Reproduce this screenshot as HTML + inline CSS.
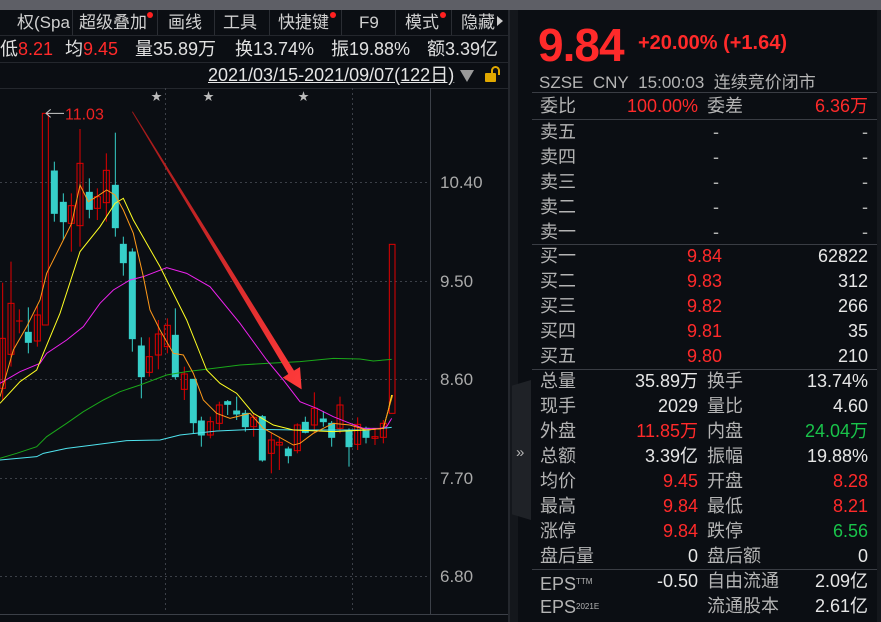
<!DOCTYPE html>
<html><head><meta charset="utf-8"><style>
*{margin:0;padding:0;box-sizing:border-box}
body{width:881px;height:622px;background:#0b0e13;position:relative;overflow:hidden;font-family:"Liberation Sans","Noto Sans CJK SC",sans-serif;color:#d8d8d8}
.a{position:absolute;white-space:nowrap}
.r{color:#ff2a2a}.g{color:#19c34a}.l{color:#b4b4b4}.w{color:#e6e6e6}
.tb{font-size:17px;color:#d0d0d0;top:10px;line-height:25px}
.sep{position:absolute;top:10px;width:1px;height:25px;background:#2a2d33}
.dot{position:absolute;width:6px;height:6px;border-radius:3px;background:#ff2020}
.st{position:absolute;top:36px;font-size:18px;line-height:26px;color:#e0e0e0;white-space:nowrap}
.row{position:absolute;left:532px;width:340px;height:25px;font-size:18px;line-height:25px}
.row span{position:absolute;white-space:nowrap}
.hl{position:absolute;left:532px;width:345px;height:1px;background:#3a3d44}
</style></head><body>
<div class="a" style="left:0;top:0;width:881px;height:10px;background:#5e5f66"></div>
<div class="a" style="left:508px;top:10px;width:2px;height:612px;background:#24272d"></div>
<div class="a" style="left:510px;top:10px;width:8px;height:612px;background:#14171c"></div>
<div class="a" style="left:512px;top:380px;width:19px;height:140px;background:#1f2227;clip-path:polygon(0 4%,100% 0,100% 100%,0 96%)"></div>
<div class="a l" style="left:516px;top:444px;font-size:15px">»</div>
<div class="a" style="left:877px;top:10px;width:4px;height:612px;background:#14171c"></div>
<div class="a" style="left:0;top:35px;width:508px;height:1px;background:#24272d"></div>
<div class="a" style="left:0;top:62px;width:508px;height:1px;background:#24272d"></div>
<div class="a" style="left:0;top:88px;width:508px;height:1px;background:#24272d"></div>
<div class="a tb" style="left:17px">权(Spa</div>
<div class="sep" style="left:72px"></div>
<div class="a tb" style="left:79px">超级叠加</div><div class="dot" style="left:147px;top:12px"></div>
<div class="sep" style="left:157px"></div>
<div class="a tb" style="left:168px">画线</div>
<div class="sep" style="left:214px"></div>
<div class="a tb" style="left:223px">工具</div>
<div class="sep" style="left:269px"></div>
<div class="a tb" style="left:278px">快捷键</div><div class="dot" style="left:330px;top:12px"></div>
<div class="sep" style="left:341px"></div>
<div class="a tb" style="left:359px">F9</div>
<div class="sep" style="left:395px"></div>
<div class="a tb" style="left:405px">模式</div><div class="dot" style="left:440px;top:12px"></div>
<div class="sep" style="left:451px"></div>
<div class="a tb" style="left:461px">隐藏</div>
<div class="a" style="left:497px;top:16px;width:0;height:0;border-left:6px solid #ccc;border-top:5px solid transparent;border-bottom:5px solid transparent"></div>
<div class="st" style="left:0">低<span class="r">8.21</span></div>
<div class="st" style="left:65px">均<span class="r">9.45</span></div>
<div class="st" style="left:135px">量35.89万</div>
<div class="st" style="left:235px">换13.74%</div>
<div class="st" style="left:331px">振19.88%</div>
<div class="st" style="left:427px">额3.39亿</div>
<div class="a" style="left:208px;top:63px;font-size:18px;line-height:24px;color:#e6e6e6;text-decoration:underline">2021/03/15-2021/09/07(122日)</div>
<div class="a" style="left:460px;top:70px;width:0;height:0;border-top:12px solid #9a9a9a;border-left:7px solid transparent;border-right:7px solid transparent"></div>
<div class="a" style="left:485px;top:73px;width:11px;height:9px;background:#e0a800;border-radius:1px"></div>
<div class="a" style="left:491px;top:66px;width:9px;height:9px;border:2px solid #e0a800;border-bottom:none;border-radius:5px 5px 0 0"></div>
<svg class="a" style="left:0;top:88px" width="508" height="534" viewBox="0 0 508 534">
<g stroke="#3c4048" stroke-dasharray="2,3" stroke-width="1">
<line x1="0" y1="94.5" x2="430" y2="94.5"/><line x1="0" y1="193.5" x2="430" y2="193.5"/><line x1="0" y1="291.5" x2="430" y2="291.5"/><line x1="0" y1="390.5" x2="430" y2="390.5"/><line x1="0" y1="488.5" x2="430" y2="488.5"/>
<line x1="165.5" y1="0" x2="165.5" y2="525"/><line x1="352.5" y1="0" x2="352.5" y2="525"/>
</g>
<line x1="430.5" y1="0" x2="430.5" y2="526" stroke="#3c4048"/>
<line x1="0" y1="526.5" x2="508" y2="526.5" stroke="#3c4048"/>
<g fill="#aaa" font-size="17" font-family="Liberation Sans"><text x="440" y="100">10.40</text><text x="440" y="199">9.50</text><text x="440" y="297">8.60</text><text x="440" y="396">7.70</text><text x="440" y="494">6.80</text></g>
<g fill="#bbb" font-size="11"><text x="151" y="12">★</text><text x="203" y="12">★</text><text x="298" y="12">★</text></g>
</svg>
<svg class="a" style="left:0;top:100px" width="440" height="380" viewBox="0 0 1320 1140">
<g stroke-width="3">
<g stroke="#e00000" fill="none">
<line x1="8" y1="548" x2="8" y2="900"/><rect x="0" y="715" width="16" height="150"/>
<line x1="33" y1="485" x2="33" y2="800"/><rect x="24" y="610" width="18" height="153"/>
<line x1="58" y1="628" x2="58" y2="700"/><line x1="48" y1="663" x2="68" y2="663"/>
<line x1="112" y1="618" x2="112" y2="740"/><rect x="103" y="645" width="18" height="78"/>
<rect x="127" y="40" width="18" height="635"/>
<line x1="214" y1="280" x2="214" y2="455"/><rect x="205" y="317" width="18" height="53"/>
<line x1="240" y1="87" x2="240" y2="440"/><rect x="231" y="190" width="18" height="187"/>
<line x1="292" y1="265" x2="292" y2="360"/><rect x="283" y="290" width="18" height="35"/>
<line x1="319" y1="160" x2="319" y2="365"/><rect x="310" y="211" width="18" height="97"/>
<line x1="448" y1="712" x2="448" y2="830"/><rect x="439" y="770" width="18" height="47"/>
<line x1="475" y1="660" x2="475" y2="808"/><rect x="466" y="702" width="18" height="63"/>
<line x1="502" y1="655" x2="502" y2="760"/><rect x="493" y="676" width="18" height="64"/>
<line x1="553" y1="800" x2="553" y2="900"/><rect x="544" y="822" width="18" height="46"/>
<line x1="631" y1="950" x2="631" y2="1015"/><rect x="622" y="965" width="18" height="40"/>
<line x1="658" y1="905" x2="658" y2="990"/><rect x="649" y="915" width="18" height="55"/>
<line x1="761" y1="940" x2="761" y2="1010"/><rect x="752" y="952" width="18" height="28"/>
<line x1="814" y1="1000" x2="814" y2="1120"/><rect x="805" y="1020" width="18" height="40"/>
<line x1="838" y1="1010" x2="838" y2="1110"/><rect x="829" y="1027" width="18" height="8"/>
<line x1="892" y1="970" x2="892" y2="1060"/><rect x="883" y="975" width="18" height="77"/>
<line x1="943" y1="877" x2="943" y2="1000"/><rect x="934" y="925" width="18" height="50"/>
<line x1="1020" y1="890" x2="1020" y2="1000"/><rect x="1011" y="915" width="18" height="70"/>
<line x1="1073" y1="952" x2="1073" y2="1050"/><rect x="1064" y="973" width="18" height="60"/>
<line x1="1125" y1="985" x2="1125" y2="1035"/><rect x="1116" y="1010" width="18" height="5"/>
<line x1="1150" y1="960" x2="1150" y2="1030"/><rect x="1141" y="970" width="18" height="42"/>
<rect x="1168" y="433" width="17" height="507"/>
</g>
<g stroke="#36cfc9" fill="#36cfc9">
<line x1="85" y1="622" x2="85" y2="760"/><rect x="76" y="697" width="18" height="30"/>
<line x1="163" y1="185" x2="163" y2="365"/><rect x="154" y="213" width="18" height="127"/>
<line x1="190" y1="280" x2="190" y2="420"/><rect x="181" y="307" width="18" height="58"/>
<line x1="268" y1="235" x2="268" y2="355"/><rect x="259" y="277" width="18" height="51"/>
<line x1="346" y1="98" x2="346" y2="410"/><rect x="337" y="256" width="18" height="127"/>
<line x1="370" y1="410" x2="370" y2="527"/><rect x="361" y="433" width="18" height="55"/>
<line x1="397" y1="445" x2="397" y2="755"/><rect x="388" y="456" width="18" height="260"/>
<line x1="424" y1="712" x2="424" y2="895"/><rect x="415" y="738" width="18" height="92"/>
<line x1="526" y1="625" x2="526" y2="838"/><rect x="517" y="706" width="18" height="124"/>
<line x1="580" y1="838" x2="580" y2="1000"/><rect x="571" y="838" width="18" height="130"/>
<line x1="604" y1="950" x2="604" y2="1040"/><rect x="595" y="963" width="18" height="42"/>
<line x1="683" y1="900" x2="683" y2="945"/><rect x="674" y="905" width="18" height="8"/>
<line x1="710" y1="890" x2="710" y2="960"/><rect x="701" y="933" width="18" height="9"/>
<line x1="736" y1="930" x2="736" y2="995"/><rect x="727" y="940" width="18" height="40"/>
<line x1="787" y1="945" x2="787" y2="1085"/><rect x="778" y="950" width="18" height="130"/>
<line x1="865" y1="1040" x2="865" y2="1090"/><rect x="856" y="1047" width="18" height="20"/>
<line x1="916" y1="950" x2="916" y2="1000"/><rect x="907" y="967" width="18" height="30"/>
<line x1="970" y1="933" x2="970" y2="980"/><rect x="961" y="957" width="18" height="8"/>
<line x1="995" y1="963" x2="995" y2="1040"/><rect x="986" y="970" width="18" height="42"/>
<line x1="1047" y1="985" x2="1047" y2="1100"/><rect x="1038" y="990" width="18" height="50"/>
<line x1="1098" y1="980" x2="1098" y2="1030"/><rect x="1089" y="985" width="18" height="27"/>
</g>
</g>
<g fill="none" stroke-width="3">
<polyline stroke="#4fe3ee" points="0,1080 110,1070 130,1060 200,1045 280,1035 380,1022 480,1020 540,1005 650,993 760,988 900,990 1000,990 1100,990 1175,982"/>
<polyline stroke="#1aa81a" points="0,1075 50,1060 110,1040 140,1010 200,970 250,935 310,900 360,875 420,855 500,825 560,815 640,805 720,795 800,790 900,785 1000,775 1080,777 1120,783 1175,778"/>
<polyline stroke="#ee22ee" points="0,850 60,815 120,790 140,760 200,720 250,680 300,610 340,570 390,540 430,530 500,503 560,520 630,560 720,670 800,780 850,840 900,905 950,925 1000,950 1050,970 1090,985 1140,985 1160,980 1175,955"/>
<polyline stroke="#ffff22" points="0,910 60,845 110,810 130,760 180,640 240,455 300,380 345,310 370,295 400,360 480,500 560,660 620,810 660,850 710,880 760,940 820,975 880,990 1000,995 1100,990 1150,985 1165,930 1175,885"/>
<polyline stroke="#ff9a1a" points="0,890 40,750 80,680 120,600 140,520 190,420 215,370 240,255 265,305 290,290 320,270 345,285 370,330 400,400 430,530 450,630 480,690 520,760 550,765 580,820 610,900 650,940 690,955 750,940 790,985 880,1035 900,1030 940,1000 1000,970 1050,975 1100,990 1150,985 1165,930 1178,885"/>
</g>
<defs><linearGradient id="ag" x1="0" y1="0" x2="1" y2="1"><stop offset="0" stop-color="#a01818"/><stop offset="1" stop-color="#ff3a3a"/></linearGradient></defs>
<polygon fill="url(#ag)" points="396,36 398,34 882,812 900,801 905,868 848,833 865,822"/>
<line x1="140" y1="40" x2="192" y2="40" stroke="#ccc" stroke-width="3"/>
<polyline points="152,28 138,40 152,52" fill="none" stroke="#ccc" stroke-width="3"/>
<text x="195" y="58" fill="#ee2222" font-size="48" font-family="Liberation Sans">11.03</text>
</svg>
<div class="a r" style="left:538px;top:18px;font-size:46px;font-weight:bold;letter-spacing:-1px">9.84</div>
<div class="a r" style="left:638px;top:32px;font-size:20px;font-weight:bold">+20.00% (+1.64)</div>
<div class="a l" style="left:539px;top:73px;font-size:17px;line-height:20px">SZSE&nbsp; CNY&nbsp; 15:00:03&nbsp; 连续竞价闭市</div>
<div class="hl" style="top:92px"></div>
<div class="row" style="top:94px"><span class="l" style="left:8px">委比</span><span class="r" style="right:174px">100.00%</span><span class="l" style="left:175px">委差</span><span class="r" style="right:4px">6.36万</span></div>
<div class="hl" style="top:119px"></div>
<div class="row" style="top:120px"><span class="l" style="left:8px">卖五</span><span class="l" style="left:181px">-</span><span class="l" style="right:4px">-</span></div>
<div class="row" style="top:145px"><span class="l" style="left:8px">卖四</span><span class="l" style="left:181px">-</span><span class="l" style="right:4px">-</span></div>
<div class="row" style="top:170px"><span class="l" style="left:8px">卖三</span><span class="l" style="left:181px">-</span><span class="l" style="right:4px">-</span></div>
<div class="row" style="top:195px"><span class="l" style="left:8px">卖二</span><span class="l" style="left:181px">-</span><span class="l" style="right:4px">-</span></div>
<div class="row" style="top:220px"><span class="l" style="left:8px">卖一</span><span class="l" style="left:181px">-</span><span class="l" style="right:4px">-</span></div>
<div class="hl" style="top:244px"></div>
<div class="row" style="top:244px"><span class="l" style="left:8px">买一</span><span class="r" style="right:150px">9.84</span><span class="w" style="right:4px">62822</span></div>
<div class="row" style="top:269px"><span class="l" style="left:8px">买二</span><span class="r" style="right:150px">9.83</span><span class="w" style="right:4px">312</span></div>
<div class="row" style="top:294px"><span class="l" style="left:8px">买三</span><span class="r" style="right:150px">9.82</span><span class="w" style="right:4px">266</span></div>
<div class="row" style="top:319px"><span class="l" style="left:8px">买四</span><span class="r" style="right:150px">9.81</span><span class="w" style="right:4px">35</span></div>
<div class="row" style="top:344px"><span class="l" style="left:8px">买五</span><span class="r" style="right:150px">9.80</span><span class="w" style="right:4px">210</span></div>
<div class="hl" style="top:369px"></div>
<div class="row" style="top:369px"><span class="l" style="left:8px">总量</span><span class="w" style="right:174px">35.89万</span><span class="l" style="left:175px">换手</span><span class="w" style="right:4px">13.74%</span></div>
<div class="row" style="top:394px"><span class="l" style="left:8px">现手</span><span class="w" style="right:174px">2029</span><span class="l" style="left:175px">量比</span><span class="w" style="right:4px">4.60</span></div>
<div class="row" style="top:419px"><span class="l" style="left:8px">外盘</span><span class="r" style="right:174px">11.85万</span><span class="l" style="left:175px">内盘</span><span class="g" style="right:4px">24.04万</span></div>
<div class="row" style="top:444px"><span class="l" style="left:8px">总额</span><span class="w" style="right:174px">3.39亿</span><span class="l" style="left:175px">振幅</span><span class="w" style="right:4px">19.88%</span></div>
<div class="row" style="top:469px"><span class="l" style="left:8px">均价</span><span class="r" style="right:174px">9.45</span><span class="l" style="left:175px">开盘</span><span class="r" style="right:4px">8.28</span></div>
<div class="row" style="top:494px"><span class="l" style="left:8px">最高</span><span class="r" style="right:174px">9.84</span><span class="l" style="left:175px">最低</span><span class="r" style="right:4px">8.21</span></div>
<div class="row" style="top:519px"><span class="l" style="left:8px">涨停</span><span class="r" style="right:174px">9.84</span><span class="l" style="left:175px">跌停</span><span class="g" style="right:4px">6.56</span></div>
<div class="row" style="top:544px"><span class="l" style="left:8px">盘后量</span><span class="w" style="right:174px">0</span><span class="l" style="left:175px">盘后额</span><span class="w" style="right:4px">0</span></div>
<div class="hl" style="top:569px"></div>
<div class="row" style="top:569px"><span class="l" style="left:8px">EPS<sup style="font-size:8px;vertical-align:6px">TTM</sup></span><span class="w" style="right:174px">-0.50</span><span class="l" style="left:175px">自由流通</span><span class="w" style="right:4px">2.09亿</span></div>
<div class="row" style="top:594px"><span class="l" style="left:8px">EPS<sup style="font-size:8px;vertical-align:4px">2021E</sup></span><span class="l" style="left:175px">流通股本</span><span class="w" style="right:4px">2.61亿</span></div>
</body></html>
